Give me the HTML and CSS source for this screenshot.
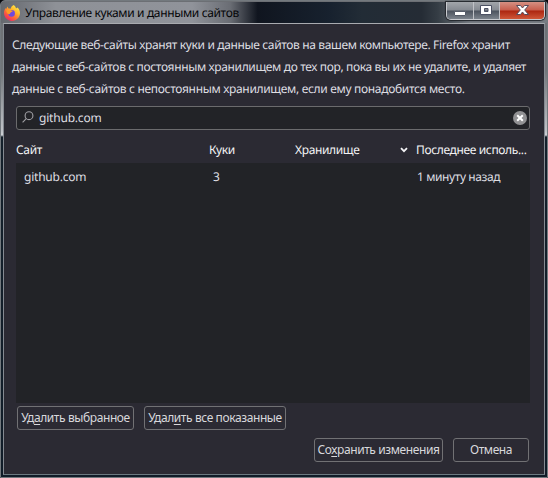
FILE: index.html
```html
<!DOCTYPE html>
<html lang="ru">
<head>
<meta charset="utf-8">
<title>Управление куками и данными сайтов</title>
<link rel="stylesheet" href="styles.css">
</head>
<body>
<div class="window">
  <header class="titlebar">
    <svg class="logo" viewBox="0 0 16 16">
      <defs>
        <linearGradient id="flame" x1="0.85" y1="0.05" x2="0.2" y2="0.95">
          <stop offset="0" stop-color="#fff04a"/><stop offset=".35" stop-color="#ffb52a"/><stop offset=".65" stop-color="#ff6a35"/><stop offset="1" stop-color="#ee2468"/>
        </linearGradient>
      </defs>
      <path fill="url(#flame)" d="M9.700 0c1.300.8 2 1.900 2.200 3.200 1-.1 1.500-.8 1.500-.8 1.600 1.300 2.600 3.400 2.600 5.700 0 4.300-3.500 7.900-8 7.900s-8-3.500-8-7.900c0-2 .7-3.900 1.800-5l.3 1.100c.3-1 .9-2 1.700-2.600 0 1 .4 1.600.9 2 .7 0 1.300 0 2 .2C6.900 2.200 8 .7 9.700 0z"/>
      <circle cx="7.600" cy="8.400" r="3.300" fill="#7048dd"/>
      <path fill="#ff9c25" d="M2.300 5.300c1.500-1.300 3.400-.7 4.600 0 .7.500 1.500.5 2 .5-.2 1-1.500 1.100-2 1.400-.8.500-.5 1.800-2 2-1.500 0-2.600-2-2.600-3.900z"/>
    </svg>
    <h1 class="title">Управление куками и данными сайтов</h1>
    <div class="controls">
      <span class="control minimize"><svg viewBox="0 0 26 16"><rect x="7.500" y="9.500" width="11" height="4" rx=".5" fill="#fff" stroke="#555b68"/></svg></span>
      <span class="control maximize"><svg viewBox="0 0 24 16"><path fill="#fff" stroke="#4d5264" fill-rule="evenodd" d="M6.500 3.500h11v9h-11zM10.500 6.500v3h3.500v-3z"/></svg></span>
      <span class="control close"><svg viewBox="0 0 44 16"><path fill="#fff" stroke="#564b5b" d="M16.500 3.500h4L22.500 6l2-2.500h4L24.700 8l3.800 4.500h-4l-2-2.500-2 2.500h-4L20.300 8z"/></svg></span>
    </div>
  </header>
  <main class="dialog">
    <p class="description"><span class="line line-a">Следующие веб-сайты хранят куки и данные сайтов на вашем компьютере. Firefox хранит</span><span class="line line-b">данные с веб-сайтов с постоянным хранилищем до тех пор, пока вы их не удалите, и удаляет</span><span class="line line-c">данные с веб-сайтов с непостоянным хранилищем, если ему понадобится место.</span></p>
    <div class="search">
      <svg class="magnifier" viewBox="0 0 12 12"><circle cx="7" cy="4.700" r="3.900"/><path d="M4.200 7.700.6 11.300"/></svg>
      <span class="query">github.com</span>
      <svg class="clear" viewBox="0 0 14 14"><circle cx="7" cy="7" r="7"/><path d="M4.200 4.200l5.600 5.600M9.800 4.200L4.200 9.800"/></svg>
    </div>
    <div class="columns head">
      <span class="h-site">Сайт</span><span class="h-cookies">Куки</span><span class="h-storage">Хранилище</span>
      <svg class="sort" viewBox="0 0 8 6"><path d="M1 1.200l3 3 3-3"/></svg>
      <span class="h-used">Последнее исполь...</span>
    </div>
    <div class="list">
      <div class="columns row"><span class="r-site">github.com</span><span class="r-cookies">3</span><span></span><span></span><span class="r-used">1 минуту назад</span></div>
    </div>
    <div class="actions">
      <button class="remove"><span>Уд<u>а</u>лить выбранное</span></button>
      <button class="remove-all"><span>Удал<u>и</u>ть все показанные</span></button>
    </div>
    <div class="footer">
      <button class="save"><span>Со<u>х</u>ранить изменения</span></button>
      <button class="cancel"><span>Отмена</span></button>
    </div>
  </main>
</div>
</body>
</html>
```
FILE: styles.css
```css
* { box-sizing: border-box; }
body { margin: 0; width: 548px; height: 478px; overflow: hidden; background: #07090d; font: 12px/22px "Noto Sans", "Open Sans", sans-serif; color: #dedee2; text-rendering: geometricPrecision; letter-spacing: -.36px; }
.window { width: 548px; height: 478px; padding: 1px 2px 2px; border: 1px solid #73797e; border-radius: 5px 5px 0 0; background: linear-gradient(#6c6f74 0, #72767a 70px, #bfc2c7 130px, #d0d3d8 134px, #14202b 136px, #101c28 100%); }
.titlebar { display: flex; height: 21px; margin: 0 -2px; padding-left: 3px; background: linear-gradient(90deg, #65686e, #8e9197 10%, #90939a 35%, #6a6d74 42%, #10151f 47%, #17212e 60%, #222c36 66%, #252c35 77%, #353d45 80%, #767b82 86%, #777c82); }
.logo { width: 16px; height: 16px; margin-top: 3px; }
.title { margin: 0 0 0 5px; font-size: 12px; font-weight: 400; line-height: 22px; color: #050608; width: 220px; white-space: nowrap; }
.controls { display: flex; height: 18px; margin: 0 2px 0 auto; border: 1px solid #c9cbd0; border-top: 0; border-radius: 0 0 5px 5px; overflow: hidden; box-shadow: 0 0 1px 1px #22252b; }
.control { height: 17px; border-right: 1px solid #c0c2c7; background: linear-gradient(#a2a6ab, #858a91 48%, #4b525d 52%, #7c838c); }
.control svg { display: block; height: 16px; }
.minimize { width: 27px; }
.maximize { width: 26px; }
.close { width: 44px; border: 0; background: linear-gradient(#d59083, #c75d4c 48%, #ac2510 52%, #cf5739); }
.dialog { height: 452px; padding: 10px 14px 0 12px; border: 1px solid #8d9096; border-color: #a9abb0 #858a91 #6c7980 #858a91; background: #2b2a33; }
.description { margin: 0 -4px 0 -4px; height: 66px; }
.line { display: block; white-space: nowrap; width: max-content; }
.line-c { letter-spacing: -.32px; }
.search { display: flex; height: 24px; margin-top: 6px; padding: 0 2px 0 5px; border: 1px solid #6b6b6d; border-radius: 3px; background: #222327; align-items: center; }
.magnifier { width: 12px; height: 12px; margin-top: -2px; fill: none; stroke: #a0a0a5; stroke-width: 1.1; }
.query { margin-left: 5px; letter-spacing: -.2px; }
.clear { width: 14px; height: 14px; margin-left: auto; }
.clear circle { fill: #919193; }
.clear path { stroke: #fff; stroke-width: 2; }
.columns { display: grid; grid-template-columns: 193px 86px 104px 17px 1fr; white-space: nowrap; }
.head { height: 33px; padding-top: 9px; color: #f3f3f5; }
.sort { width: 8px; height: 6px; margin: 8px 0 0 1px; fill: none; stroke: #f3f3f5; stroke-width: 1.8; }
.list { height: 240px; background: #222327; padding-top: 3px; }
.row span { justify-self: start; }
.r-site { margin-left: 8px; letter-spacing: -.22px; }
.r-cookies { margin-left: 4px; }
.r-used { margin-left: 1px; letter-spacing: -.4px; }
.actions { display: flex; gap: 10px; margin: 3px 0 0 1px; }
button { height: 24px; padding: 0; border: 1px solid #717174; border-radius: 3px; background: #2b2a33; color: #d8d8dc; font: inherit; letter-spacing: -.4px; white-space: nowrap; display: flex; align-items: center; justify-content: center; }
u { text-underline-offset: 2px; text-decoration-skip-ink: none; }
.remove { width: 117px; }
.remove-all { width: 142px; }
.footer { display: flex; justify-content: flex-end; gap: 10px; margin: 8px 1px 0 0; }
.save { width: 129px; }
.cancel { width: 76px; }
```
